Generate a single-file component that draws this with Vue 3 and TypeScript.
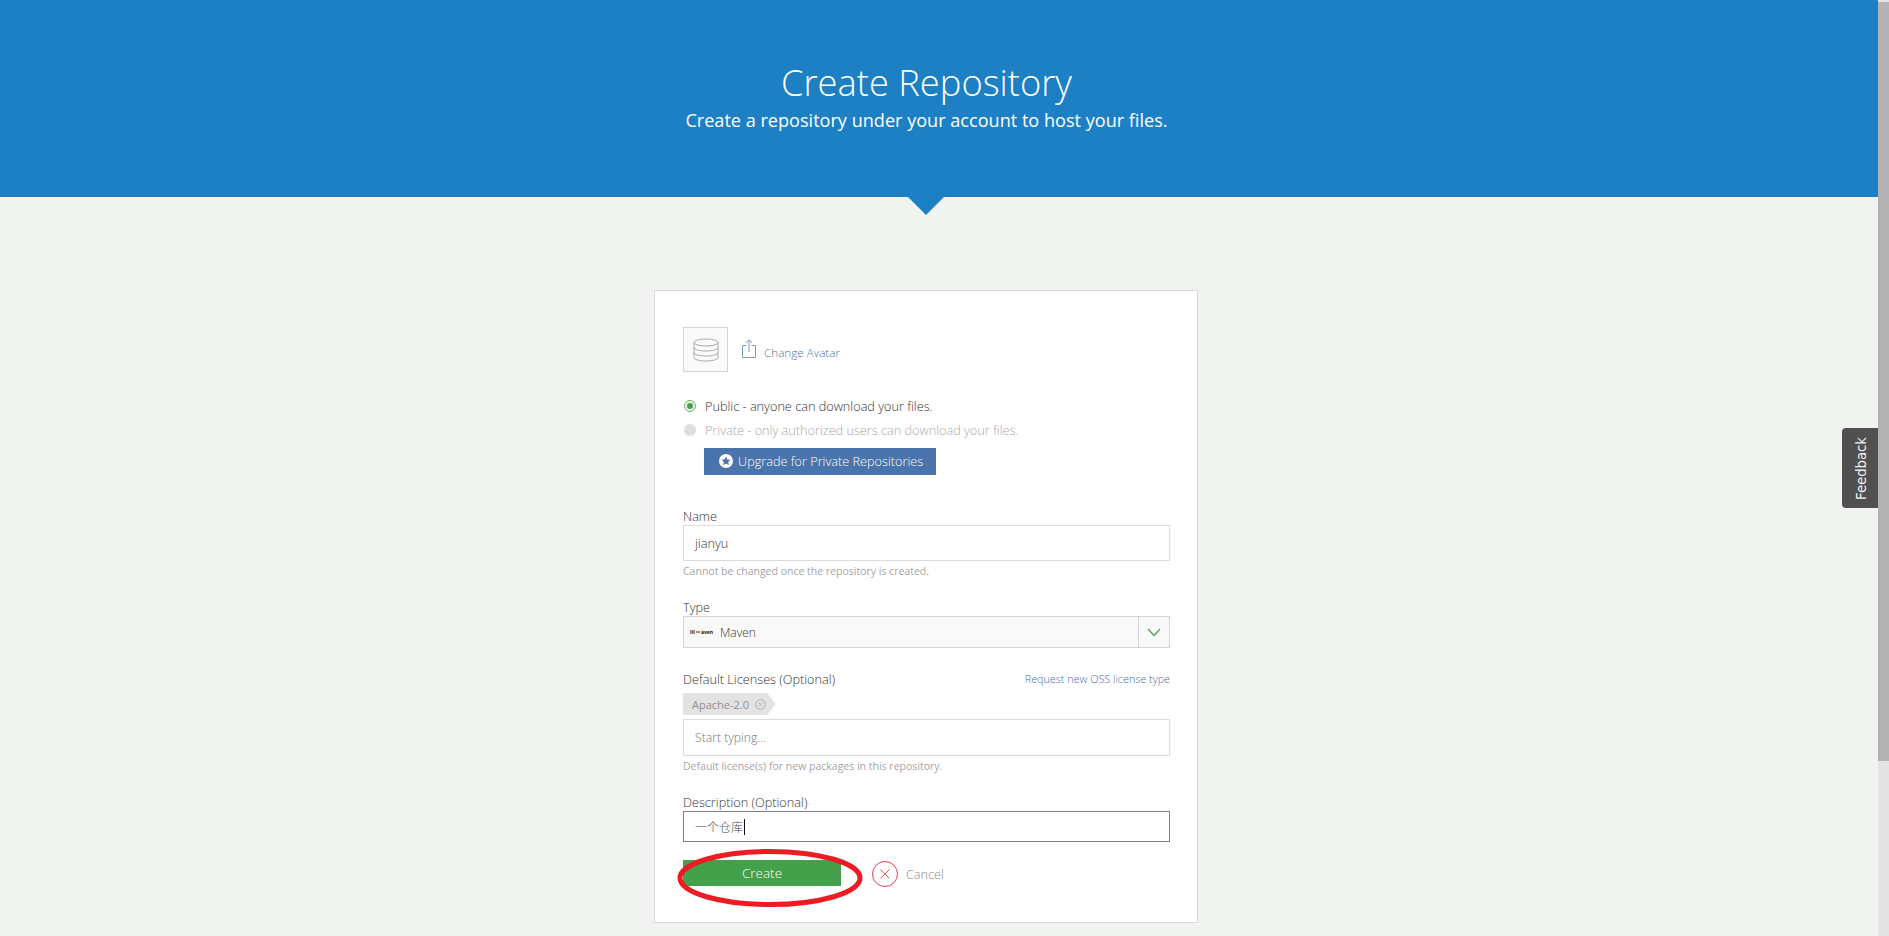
<script setup lang="ts">
const helpName = 'Cannot be changed once the repository is created.'
const helpLicense = 'Default license(s) for new packages in this repository.'
</script>

<template>
  <div class="page">
    <main class="main">
      <header class="hero">
        <div class="hero-inner">
          <h1>Create Repository</h1>
          <p>Create a repository under your account to host your files.</p>
          <span class="arrow"></span>
        </div>
      </header>
      <div class="content">
        <section class="card">
          <div class="avatar-row">
            <div class="avatar">
              <svg width="26" height="26" viewBox="0 0 26 26" fill="none" stroke="#a9a9a9" stroke-width="1">
                <ellipse cx="13" cy="5.5" rx="12" ry="3.5" />
                <path d="M1 5.5v15c0 2 5.4 3.5 12 3.5s12-1.500 12-3.500v-15" />
                <path d="M1 10.500c0 2 5.400 3.500 12 3.500s12-1.500 12-3.500" />
                <path d="M1 15.500c0 2 5.400 3.500 12 3.500s12-1.500 12-3.500" />
              </svg>
            </div>
            <svg class="upload" width="14" height="19" viewBox="0 0 14 19" fill="none" stroke="#7e97c0" stroke-width="1">
              <path d="M4.500 6.500H.5v12h13v-12h-4" />
              <path d="M7 13V1M3.800 4 7 .8 10.200 4" />
            </svg>
            <a class="link change">Change Avatar</a>
          </div>

          <div class="radio-line first">
            <span class="radio on"><i></i></span>
            <span>Public - anyone can download your files.</span>
          </div>
          <div class="radio-line muted">
            <span class="radio off"></span>
            <span>Private - only authorized users can download your files.</span>
          </div>
          <button class="upgrade" type="button">
            <svg width="14" height="14" viewBox="0 0 14 14">
              <circle cx="7" cy="7" r="7" fill="#fff" />
              <path d="M7 2.300 8.300 5.400l3.300.3-2.500 2.200.8 3.300L7 9.400 4.100 11.200l.8-3.300-2.500-2.200 3.300-.3z" fill="#4a74ab" />
            </svg>
            Upgrade for Private Repositories
          </button>

          <div class="field name-field">
            <label>Name</label>
            <div class="input tall">jianyu</div>
            <div class="help">{{ helpName }}</div>
          </div>

          <div class="field type-field">
            <label>Type</label>
            <div class="select">
              <span class="maven-logo"><b>III</b><em></em><u>aven</u></span>
              <span class="select-text">Maven</span>
              <span class="select-btn">
                <svg width="14" height="9" viewBox="0 0 14 9" fill="none" stroke="#4d9f52" stroke-width="1.200">
                  <path d="M1 1l6 6.500L13 1" />
                </svg>
              </span>
            </div>
          </div>

          <div class="field lic-field">
            <div class="label-row">
              <label>Default Licenses (Optional)</label>
              <a class="link request">Request new OSS license type</a>
            </div>
            <div class="tag">
              <span>Apache-2.0</span>
              <svg width="11" height="11" viewBox="0 0 11 11" fill="none" stroke="#aeaeae" stroke-width="1">
                <circle cx="5.500" cy="5.500" r="4.800" />
                <path d="M3.800 3.800l3.400 3.400M7.200 3.800 3.800 7.200" />
              </svg>
            </div>
            <div class="input lic placeholder">Start typing...</div>
            <div class="help">{{ helpLicense }}</div>
          </div>

          <div class="field desc-field">
            <label>Description (Optional)</label>
            <div class="input focus"><span class="cjk">一个仓库</span><i class="caret"></i></div>
          </div>

          <div class="actions">
            <div class="create-wrap">
              <button class="create" type="button">Create</button>
              <svg class="ring" width="186" height="60" viewBox="0 0 186 60" fill="none">
                <ellipse cx="93" cy="29" rx="90" ry="26.500" stroke="#ed1c24" stroke-width="5" />
              </svg>
            </div>
            <a class="cancel">
              <svg width="26" height="26" viewBox="0 0 26 26" fill="none" stroke="#e0405a" stroke-width="1">
                <circle cx="13" cy="13" r="12.500" />
                <path d="M8.500 8.500l9 9M17.500 8.500l-9 9" stroke="#e2574c" />
              </svg>
              <span>Cancel</span>
            </a>
          </div>
        </section>
      </div>
    </main>
    <div class="scrollbar"><div class="thumb"></div></div>
    <div class="feedback"><span>Feedback</span></div>
  </div>
</template>

<style>
html, body { margin: 0; height: 100%; overflow: hidden; }
</style>

<style scoped>
.page {
  position: relative;
  display: flex;
  width: 1889px;
  height: 936px;
  overflow: hidden;
  font-family: "Open Sans", "Noto Sans CJK SC", sans-serif;
  font-size: 12.700px;
  font-weight: 300;
  color: #333;
  background: #f1f3f0;
}
.main { width: 1878px; flex: none; }
.hero { height: 197px; background: #1d7fc4; color: #fff; }
.hero-inner {
  position: relative;
  width: 1853px;
  height: 197px;
  text-align: center;
}
.hero h1 {
  margin: 0;
  padding-top: 57px;
  font-size: 36.300px;
  line-height: 50px;
  font-weight: 300;
}
.hero p { margin: 1px 0 0; font-size: 18.100px; line-height: 24px; font-weight: 400; }
.arrow {
  position: absolute;
  left: 908px;
  top: 197px;
  width: 0;
  height: 0;
  border-left: 18.500px solid transparent;
  border-right: 18.500px solid transparent;
  border-top: 18px solid #1d7fc4;
}
.content { width: 1852px; display: flex; justify-content: center; padding-top: 93px; }
.card {
  box-sizing: border-box;
  width: 544px;
  height: 633px;
  padding: 36px 27px 0 28px;
  background: #fff;
  border: 1px solid #d9d9d9;
}
.avatar-row { display: flex; align-items: center; height: 45px; }
.avatar {
  box-sizing: border-box;
  width: 45px;
  height: 45px;
  display: flex;
  align-items: center;
  justify-content: center;
  background: #fafafa;
  border: 1px solid #d5d5d5;
}
.upload { margin-left: 14px; margin-top: -3px; }
.link { color: #4a6fa5; }
.change { margin-left: 8px; margin-top: 5px; font-size: 11.700px; }
.radio-line { display: flex; align-items: center; gap: 9px; height: 24px; color: #333; }
.radio-line.first { margin-top: 22px; }
.radio-line.muted { color: #a8a8a8; }
.radio {
  box-sizing: border-box;
  width: 12px;
  height: 12px;
  margin-left: 1px;
  border-radius: 50%;
  display: flex;
  align-items: center;
  justify-content: center;
}
.radio.on { border: 1px solid #6fb373; background: #e9f3ea; }
.radio.on i { width: 6px; height: 6px; border-radius: 50%; background: #45a04b; }
.radio.off { background: #dedede; }
.upgrade {
  display: flex;
  align-items: center;
  gap: 5px;
  box-sizing: border-box;
  width: 232px;
  height: 27px;
  margin: 6px 0 0 21px;
  padding: 0 0 1px 15px;
  border: 0;
  background: #4a74ab;
  color: #fff;
  font: inherit;
}
.field label { display: block; line-height: 18px; }
.name-field { margin-top: 32px; }
.input {
  box-sizing: border-box;
  display: flex;
  align-items: center;
  padding: 0 11px;
  border: 1px solid #dcdcdc;
  background: #fff;
}
.input.tall { height: 36px; }
.help { margin-top: 3px; line-height: 14px; font-size: 10.500px; font-weight: 400; color: #a5a5a5; }
.type-field { margin-top: 20px; }
.select {
  box-sizing: border-box;
  display: flex;
  align-items: center;
  height: 32px;
  border: 1px solid #d5d5d5;
  background: #f9f9f9;
}
.maven-logo {
  display: flex;
  align-items: center;
  gap: 1px;
  width: 23px;
  margin-left: 6px;
  font-size: 5px;
  line-height: 1;
  color: #111;
}
.maven-logo b { font-weight: 700; }
.maven-logo em { width: 4px; height: 2px; background: #d8862a; }
.maven-logo u { text-decoration: none; font-weight: 700; }
.select-text { margin-left: 7px; flex: 1; font-size: 12px; }
.select-btn {
  box-sizing: border-box;
  width: 31px;
  height: 100%;
  display: flex;
  align-items: center;
  justify-content: center;
  border-left: 1px solid #d5d5d5;
}
.lic-field { margin-top: 22px; }
.label-row { display: flex; justify-content: space-between; align-items: center; }
.request { font-size: 10.800px; margin-top: -2px; }
.tag {
  position: relative;
  display: flex;
  align-items: center;
  gap: 6px;
  height: 22px;
  margin-top: 5px;
  padding: 0 0 0 9px;
  width: 75px;
  background: #e3e3e3;
  color: #8f8f8f;
  font-size: 11px;
  font-weight: 400;
}
.tag::after {
  content: "";
  position: absolute;
  left: 84px;
  top: 0;
  border-top: 11px solid transparent;
  border-bottom: 11px solid transparent;
  border-left: 9px solid #e3e3e3;
}
.input.lic { height: 37px; margin-top: 4px; padding-left: 11px; font-size: 12.200px; color: #777; }
.desc-field { margin-top: 20px; }
.input.focus { height: 31px; border-color: #808080; }
.cjk { font-size: 12px; color: #444; }
.caret { width: 1px; height: 16px; margin-left: 1px; background: #111; }
.actions { display: flex; align-items: center; margin-top: 18px; height: 26px; }
.create-wrap { position: relative; width: 158px; height: 26px; }
.create {
  width: 158px;
  height: 26px;
  padding: 0 0 1px;
  border: 0;
  background: #45a04b;
  color: #fff;
  font: inherit;
  font-size: 13.500px;
}
.ring { position: absolute; left: -6px; top: -11px; }
.cancel { display: flex; align-items: center; gap: 8px; margin-left: 31px; margin-top: 2px; color: #8a8a8a; }
.scrollbar { width: 11px; flex: none; padding-top: 2px; background: #e4e4e4; box-sizing: border-box; }
.thumb { height: 759px; background: #b3b3b3; }
.feedback {
  position: absolute;
  left: 1842px;
  top: 428px;
  width: 36px;
  height: 80px;
  padding-left: 2px;
  box-sizing: border-box;
  display: flex;
  align-items: center;
  justify-content: center;
  background: #505050;
  border-radius: 4px 0 0 4px;
  color: #f0f0f0;
}
.feedback span {
  transform: rotate(-90deg);
  font-family: "DejaVu Sans", sans-serif;
  font-size: 13.200px;
  font-weight: 400;
  white-space: nowrap;
}
</style>
